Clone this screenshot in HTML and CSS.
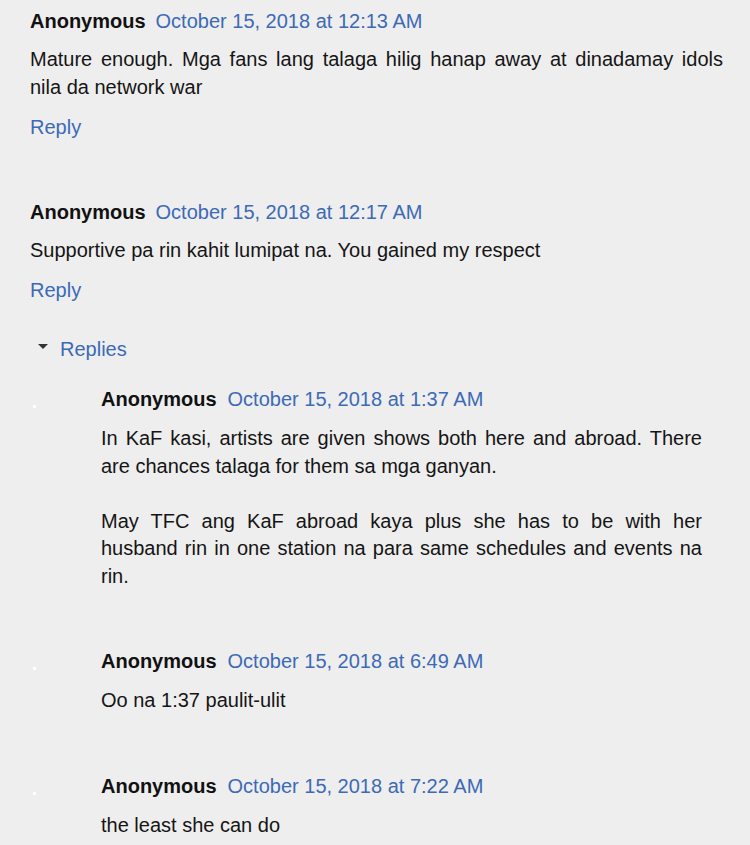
FILE: index.html
```html
<!DOCTYPE html>
<html>
<head>
<meta charset="utf-8">
<link rel="stylesheet" href="styles.css">
</head>
<body>
<div class="thread">
  <div class="comment">
    <div class="head"><span class="user">Anonymous</span><a class="date">October 15, 2018 at 12:13 AM</a></div>
    <p class="text">Mature enough. Mga fans lang talaga hilig hanap away at dinadamay idols nila da network war</p>
    <a class="reply">Reply</a>
  </div>
  <div class="comment second">
    <div class="head"><span class="user">Anonymous</span><a class="date">October 15, 2018 at 12:17 AM</a></div>
    <p class="text">Supportive pa rin kahit lumipat na. You gained my respect</p>
    <a class="reply">Reply</a>
    <div class="toggle"><span class="tri"></span><a class="replies">Replies</a></div>
    <div class="nested">
      <div class="child">
        <span class="bullet"></span>
        <div class="cbody">
          <div class="head"><span class="user">Anonymous</span><a class="date">October 15, 2018 at 1:37 AM</a></div>
          <p class="text">In KaF kasi, artists are given shows both here and abroad. There are chances talaga for them sa mga ganyan.<br><br>May TFC ang KaF abroad kaya plus she has to be with her husband rin in one station na para same schedules and events na rin.</p>
        </div>
      </div>
      <div class="child">
        <span class="bullet"></span>
        <div class="cbody">
          <div class="head"><span class="user">Anonymous</span><a class="date">October 15, 2018 at 6:49 AM</a></div>
          <p class="text">Oo na 1:37 paulit-ulit</p>
        </div>
      </div>
      <div class="child">
        <span class="bullet"></span>
        <div class="cbody">
          <div class="head"><span class="user">Anonymous</span><a class="date">October 15, 2018 at 7:22 AM</a></div>
          <p class="text">the least she can do</p>
        </div>
      </div>
    </div>
  </div>
</div>
</body>
</html>
```
FILE: styles.css
```css
html, body {
  margin: 0;
  padding: 0;
  background: #eeeeee;
}
body {
  font-family: "Liberation Sans", Arial, sans-serif;
  font-size: 20px;
  line-height: 27.5px;
  color: #151515;
}
.thread {
  padding: 8px 27px 0 30px;
  display: flex;
  flex-direction: column;
}
.comment {
  display: flex;
  flex-direction: column;
  align-items: flex-start;
}
.second {
  margin-top: 58px;
}
.head {
  display: flex;
  gap: 10px;
  white-space: nowrap;
}
.user {
  font-weight: bold;
  color: #111;
}
.date, .reply, .replies {
  color: #3c6ab6;
  text-decoration: none;
}
.text {
  margin: 10.5px 0 0;
  text-align: justify;
  align-self: stretch;
}
.reply {
  margin-top: 12.5px;
}
.toggle {
  margin-top: 31.5px;
  display: flex;
  align-items: center;
  gap: 12px;
  padding-left: 8px;
}
.tri {
  width: 0;
  height: 0;
  border-left: 5px solid transparent;
  border-right: 5px solid transparent;
  border-top: 5px solid #333;
  margin-top: -6px;
}
.nested {
  align-self: stretch;
  margin-top: 22.5px;
  display: flex;
  flex-direction: column;
  gap: 58px;
  padding-right: 21px;
}
.child {
  display: flex;
}
.bullet {
  width: 3px;
  height: 3px;
  background: #fff;
  margin: 19px 0 0 3px;
  flex: none;
}
.cbody {
  margin-left: 65px;
  flex: 1;
  display: flex;
  flex-direction: column;
}
.cbody .head {
  gap: 11px;
}
.cbody .text {
  margin-top: 11.5px;
}
```
